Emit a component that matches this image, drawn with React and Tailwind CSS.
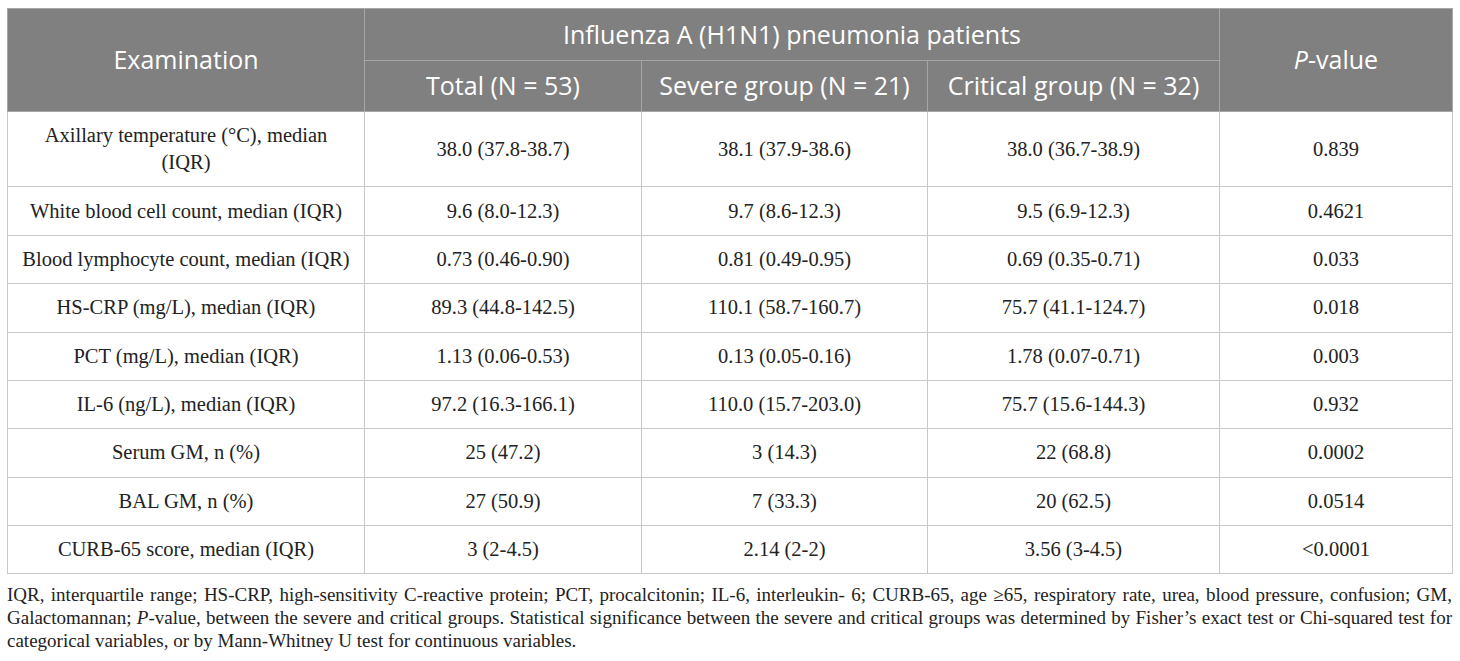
const rows = [
  ['Axillary temperature (°C), median (IQR)', '38.0 (37.8-38.7)', '38.1 (37.9-38.6)', '38.0 (36.7-38.9)', '0.839'],
  ['White blood cell count, median (IQR)', '9.6 (8.0-12.3)', '9.7 (8.6-12.3)', '9.5 (6.9-12.3)', '0.4621'],
  ['Blood lymphocyte count, median (IQR)', '0.73 (0.46-0.90)', '0.81 (0.49-0.95)', '0.69 (0.35-0.71)', '0.033'],
  ['HS-CRP (mg/L), median (IQR)', '89.3 (44.8-142.5)', '110.1 (58.7-160.7)', '75.7 (41.1-124.7)', '0.018'],
  ['PCT (mg/L), median (IQR)', '1.13 (0.06-0.53)', '0.13 (0.05-0.16)', '1.78 (0.07-0.71)', '0.003'],
  ['IL-6 (ng/L), median (IQR)', '97.2 (16.3-166.1)', '110.0 (15.7-203.0)', '75.7 (15.6-144.3)', '0.932'],
  ['Serum GM, n (%)', '25 (47.2)', '3 (14.3)', '22 (68.8)', '0.0002'],
  ['BAL GM, n (%)', '27 (50.9)', '7 (33.3)', '20 (62.5)', '0.0514'],
  ['CURB-65 score, median (IQR)', '3 (2-4.5)', '2.14 (2-2)', '3.56 (3-4.5)', '<0.0001'],
]

export default function App() {
  return (
    <div className="min-h-[661px] w-[1460px] bg-white pl-[7px] pr-[8px] pt-[8px]">
      <table className="w-[1445px] table-fixed border-collapse">
        <colgroup>
          <col className="w-[357px]" />
          <col className="w-[277px]" />
          <col className="w-[286px]" />
          <col className="w-[292px]" />
          <col className="w-[233px]" />
        </colgroup>
        <thead className="bg-[#808080] font-['Open_Sans',sans-serif] text-[25px] font-normal text-white">
          <tr className="h-[52px]">
            <th rowSpan={2} className="border border-[#a6a6a6] font-normal">
              Examination
            </th>
            <th colSpan={3} className="border border-[#a6a6a6] font-normal">
              Influenza A (H1N1) pneumonia patients
            </th>
            <th rowSpan={2} className="border border-[#a6a6a6] font-normal">
              <i>P</i>-value
            </th>
          </tr>
          <tr className="h-[51px]">
            <th className="border border-[#a6a6a6] font-normal">Total (N = 53)</th>
            <th className="border border-[#a6a6a6] font-normal">Severe group (N = 21)</th>
            <th className="border border-[#a6a6a6] font-normal">Critical group (N = 32)</th>
          </tr>
        </thead>
        <tbody className="font-['Liberation_Serif',serif] text-[20.5px] leading-[27px] text-[#222]">
          {rows.map((row) => (
            <tr key={row[0]}>
              {row.map((cell, i) => (
                <td
                  key={i}
                  className={
                    i === 0
                      ? 'border border-[#c8c8c8] px-[12px] py-[10.2px] text-center'
                      : 'border border-[#c8c8c8] px-2 py-[10.2px] text-center'
                  }
                >
                  {cell}
                </td>
              ))}
            </tr>
          ))}
        </tbody>
      </table>
      <p className="mt-[9px] w-[1445px] text-justify font-['Liberation_Serif',serif] text-[19px] leading-[23px] text-[#222]">
        IQR, interquartile range; HS-CRP, high-sensitivity C-reactive protein; PCT, procalcitonin; IL-6, interleukin- 6;
        CURB-65, age ≥65, respiratory rate, urea, blood pressure, confusion; GM, Galactomannan; <i>P</i>-value, between
        the severe and critical groups. Statistical significance between the severe and critical groups was determined
        by Fisher’s exact test or Chi-squared test for categorical variables, or by Mann-Whitney U test for continuous
        variables.
      </p>
    </div>
  )
}
